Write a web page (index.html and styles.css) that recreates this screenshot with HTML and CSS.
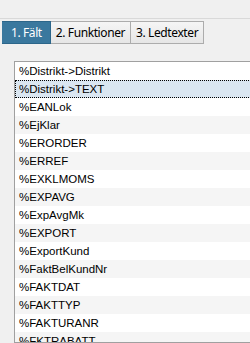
FILE: index.html
```html
<!DOCTYPE html>
<html lang="sv">
<head>
    <meta charset="UTF-8">
    <title>Fält</title>
    <link rel="stylesheet" href="styles.css">
</head>
<body>
    <div class="tabbar">
        <div class="tab active">1. Fält</div>
        <div class="tab">2. Funktioner</div>
        <div class="tab">3. Ledtexter</div>
    </div>

    <div class="list">
        <div class="row">%Distrikt-&gt;Distrikt</div>
        <div class="row selected">%Distrikt-&gt;TEXT</div>
        <div class="row">%EANLok</div>
        <div class="row">%EjKlar</div>
        <div class="row">%ERORDER</div>
        <div class="row">%ERREF</div>
        <div class="row">%EXKLMOMS</div>
        <div class="row">%EXPAVG</div>
        <div class="row">%ExpAvgMk</div>
        <div class="row">%EXPORT</div>
        <div class="row">%ExportKund</div>
        <div class="row">%FaktBelKundNr</div>
        <div class="row">%FAKTDAT</div>
        <div class="row">%FAKTTYP</div>
        <div class="row">%FAKTURANR</div>
        <div class="row">%FKTRABATT</div>
    </div>
</body>
</html>
```

FILE: styles.css
```css
html, body {
    margin: 0;
    height: 100%;
    overflow: hidden;
}
body {
    background-color: #f0f0f0;
    font-family: "Liberation Sans", Arial, sans-serif;
    width: 250px;
}
.tabbar {
    display: flex;
    margin-top: 18px;
    padding: 2px 0 0 2px;
    border-top: 1px solid #d9d9d9;
    height: 23px;
}
.tab {
    font-family: "Noto Sans", sans-serif;
    font-size: 12px;
    line-height: 21px;
    padding: 0 5px;
    color: #000;
    background: linear-gradient(#f5f5f5, #e6e6e6);
    border: 1px solid #acacac;
    border-left: none;
    letter-spacing: -0.4px;
}
.tab.active {
    background: #3a789e;
    color: #fff;
    border-color: #2c668a;
    padding: 0 8px 0 9px;
}
.list {
    margin: 17px 0 0 14px;
    width: 260px;
    border: 1px solid #a0a0a0;
    background: #fff;
    height: 280px;
    overflow: hidden;
}
.row {
    height: 18px;
    line-height: 18px;
    font-size: 11.5px;
    padding-left: 4px;
    color: #000;
    box-sizing: border-box;
}
.row:nth-child(even) {
    background: #f5f5f5;
}
.row.selected {
    background: #dae6f1;
    outline: 1px dotted #000;
    outline-offset: -1px;
}
```
